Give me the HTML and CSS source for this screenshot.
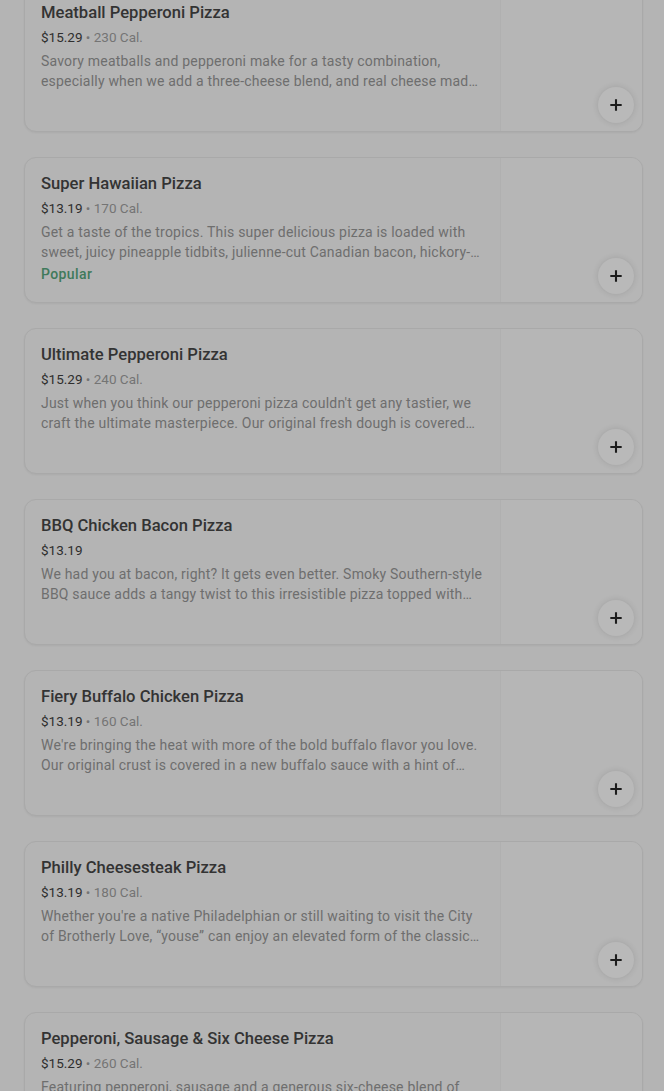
FILE: index.html
```html
<!DOCTYPE html>
<html lang="en">
<head>
<meta charset="utf-8">
<link rel="stylesheet" href="styles.css">
</head>
<body>
<main class="list">
  <article class="card">
    <div class="info">
      <h3 class="title">Meatball Pepperoni Pizza</h3>
      <p class="meta"><span class="price">$15.29</span> • 230 Cal.</p>
      <p class="desc">Savory meatballs and pepperoni make for a tasty combination, especially when we add a three-cheese blend, and real cheese made from mozzarella to this classic pie.</p>
    </div>
    <div class="media"></div>
    <button class="add" aria-label="Add"><svg viewBox="0 0 16 16" width="14" height="14"><path d="M8 1.5v13M1.5 8h13" stroke="currentColor" stroke-width="2.4"/></svg></button>
  </article>
  <article class="card">
    <div class="info">
      <h3 class="title">Super Hawaiian Pizza</h3>
      <p class="meta"><span class="price">$13.19</span> • 170 Cal.</p>
      <p class="desc">Get a taste of the tropics. This super delicious pizza is loaded with sweet, juicy pineapple tidbits, julienne-cut Canadian bacon, hickory-smoked bacon and real cheese.</p>
      <p class="tag">Popular</p>
    </div>
    <div class="media"></div>
    <button class="add" aria-label="Add"><svg viewBox="0 0 16 16" width="14" height="14"><path d="M8 1.5v13M1.5 8h13" stroke="currentColor" stroke-width="2.4"/></svg></button>
  </article>
  <article class="card">
    <div class="info">
      <h3 class="title">Ultimate Pepperoni Pizza</h3>
      <p class="meta"><span class="price">$15.29</span> • 240 Cal.</p>
      <p class="desc">Just when you think our pepperoni pizza couldn't get any tastier, we craft the ultimate masterpiece. Our original fresh dough is covered with a blend of cheeses.</p>
    </div>
    <div class="media"></div>
    <button class="add" aria-label="Add"><svg viewBox="0 0 16 16" width="14" height="14"><path d="M8 1.5v13M1.5 8h13" stroke="currentColor" stroke-width="2.4"/></svg></button>
  </article>
  <article class="card">
    <div class="info">
      <h3 class="title">BBQ Chicken Bacon Pizza</h3>
      <p class="meta"><span class="price">$13.19</span></p>
      <p class="desc">We had you at bacon, right? It gets even better. Smoky Southern-style BBQ sauce adds a tangy twist to this irresistible pizza topped with grilled chicken and bacon.</p>
    </div>
    <div class="media"></div>
    <button class="add" aria-label="Add"><svg viewBox="0 0 16 16" width="14" height="14"><path d="M8 1.5v13M1.5 8h13" stroke="currentColor" stroke-width="2.4"/></svg></button>
  </article>
  <article class="card">
    <div class="info">
      <h3 class="title">Fiery Buffalo Chicken Pizza</h3>
      <p class="meta"><span class="price">$13.19</span> • 160 Cal.</p>
      <p class="desc">We're bringing the heat with more of the bold buffalo flavor you love. Our original crust is covered in a new buffalo sauce with a hint of garlic and grilled chicken.</p>
    </div>
    <div class="media"></div>
    <button class="add" aria-label="Add"><svg viewBox="0 0 16 16" width="14" height="14"><path d="M8 1.5v13M1.5 8h13" stroke="currentColor" stroke-width="2.4"/></svg></button>
  </article>
  <article class="card">
    <div class="info">
      <h3 class="title">Philly Cheesesteak Pizza</h3>
      <p class="meta"><span class="price">$13.19</span> • 180 Cal.</p>
      <p class="desc">Whether you're a native Philadelphian or still waiting to visit the City of Brotherly Love, “youse” can enjoy an elevated form of the classic cheesesteak sandwich.</p>
    </div>
    <div class="media"></div>
    <button class="add" aria-label="Add"><svg viewBox="0 0 16 16" width="14" height="14"><path d="M8 1.5v13M1.5 8h13" stroke="currentColor" stroke-width="2.4"/></svg></button>
  </article>
  <article class="card">
    <div class="info">
      <h3 class="title">Pepperoni, Sausage &amp; Six Cheese Pizza</h3>
      <p class="meta"><span class="price">$15.29</span> • 260 Cal.</p>
      <p class="desc">Featuring pepperoni, sausage and a generous six-cheese blend of mozzarella, provolone, parmesan, asiago, romano and fontina cheeses.</p>
    </div>
    <div class="media"></div>
    <button class="add" aria-label="Add"><svg viewBox="0 0 16 16" width="14" height="14"><path d="M8 1.5v13M1.5 8h13" stroke="currentColor" stroke-width="2.4"/></svg></button>
  </article>
</main>
</body>
</html>
```
FILE: styles.css
```css
* { box-sizing: border-box; }
html, body { margin: 0; padding: 0; }
body {
  background: #b4b4b4;
  font-family: Roboto, "Liberation Sans", sans-serif;
  height: 1091px;
  overflow: hidden;
}
.list {
  display: flex;
  flex-direction: column;
  gap: 25px;
  margin-top: -14px;
  padding: 0 21px 0 24px;
}
.card {
  position: relative;
  display: grid;
  grid-template-columns: 1fr 142px;
  height: 146px;
  border: 1px solid #a9a9a9;
  border-radius: 12px;
  background: #b4b4b4;
  overflow: hidden;
  box-shadow: 0 1px 2px rgba(0,0,0,0.05);
}
.info {
  padding: 14px 16px 0 16px;
  min-width: 0;
}
.title {
  margin: 0;
  font-size: 16.6px;
  line-height: 24px;
  font-weight: 500;
  color: #333333;
}
.meta {
  margin: 2px 0 0;
  font-size: 13.5px;
  line-height: 20px;
  color: #747474;
}
.price { color: #2e2e2e; }
.desc {
  margin: 4px 0 0;
  font-size: 14px;
  line-height: 20px;
  letter-spacing: 0.2px;
  color: #6e6e6e;
  display: -webkit-box;
  -webkit-line-clamp: 2;
  -webkit-box-orient: vertical;
  overflow: hidden;
}
.tag {
  margin: 2px 0 0;
  font-size: 14px;
  line-height: 20px;
  letter-spacing: 0.4px;
  font-weight: 500;
  color: #407a5b;
}
.media {
  background: #b6b6b6;
  border-left: 1px solid #b0b0b0;
}
.add {
  position: absolute;
  right: 8px;
  bottom: 8px;
  width: 36px;
  height: 36px;
  border: none;
  border-radius: 50%;
  background: #b9b9b9;
  color: #1c1c1c;
  display: flex;
  align-items: center;
  justify-content: center;
  padding: 0;
  box-shadow: 0 0 6px rgba(0,0,0,0.12);
}
```
